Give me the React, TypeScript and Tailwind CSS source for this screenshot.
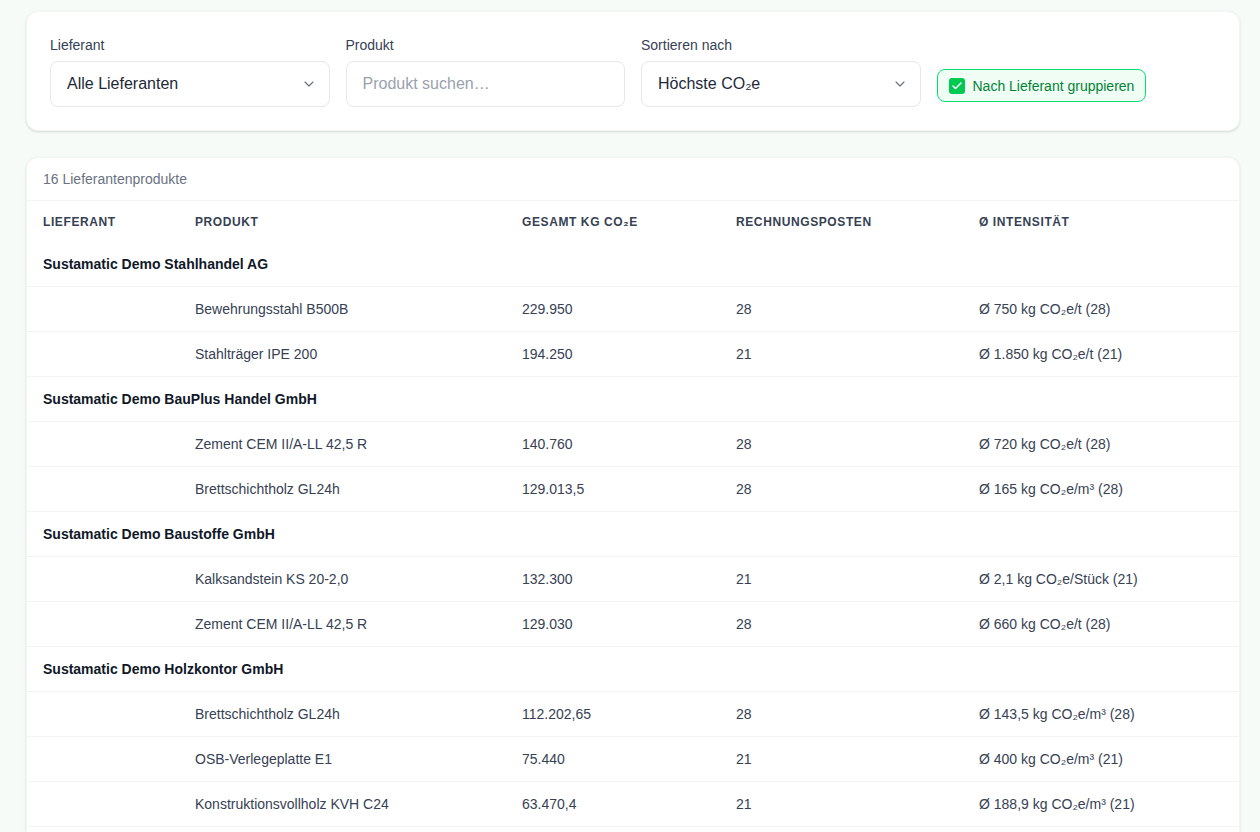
import { ChevronDown, Check } from 'lucide-react'

type Row = {
  product: string
  total: string
  items: number
  intensity: string
}

type Group = {
  supplier: string
  rows: Row[]
}

const groups: Group[] = [
  {
    supplier: 'Sustamatic Demo Stahlhandel AG',
    rows: [
      { product: 'Bewehrungsstahl B500B', total: '229.950', items: 28, intensity: 'Ø 750 kg CO₂e/t (28)' },
      { product: 'Stahlträger IPE 200', total: '194.250', items: 21, intensity: 'Ø 1.850 kg CO₂e/t (21)' },
    ],
  },
  {
    supplier: 'Sustamatic Demo BauPlus Handel GmbH',
    rows: [
      { product: 'Zement CEM II/A-LL 42,5 R', total: '140.760', items: 28, intensity: 'Ø 720 kg CO₂e/t (28)' },
      { product: 'Brettschichtholz GL24h', total: '129.013,5', items: 28, intensity: 'Ø 165 kg CO₂e/m³ (28)' },
    ],
  },
  {
    supplier: 'Sustamatic Demo Baustoffe GmbH',
    rows: [
      { product: 'Kalksandstein KS 20-2,0', total: '132.300', items: 21, intensity: 'Ø 2,1 kg CO₂e/Stück (21)' },
      { product: 'Zement CEM II/A-LL 42,5 R', total: '129.030', items: 28, intensity: 'Ø 660 kg CO₂e/t (28)' },
    ],
  },
  {
    supplier: 'Sustamatic Demo Holzkontor GmbH',
    rows: [
      { product: 'Brettschichtholz GL24h', total: '112.202,65', items: 28, intensity: 'Ø 143,5 kg CO₂e/m³ (28)' },
      { product: 'OSB-Verlegeplatte E1', total: '75.440', items: 21, intensity: 'Ø 400 kg CO₂e/m³ (21)' },
      { product: 'Konstruktionsvollholz KVH C24', total: '63.470,4', items: 21, intensity: 'Ø 188,9 kg CO₂e/m³ (21)' },
    ],
  },
  {
    supplier: 'Sustamatic Demo Dämmtechnik GmbH',
    rows: [
      { product: 'Mineralwolle WLG 035', total: '48.720', items: 21, intensity: 'Ø 1,2 kg CO₂e/m² (21)' },
      { product: 'EPS-Dämmplatte 035', total: '36.540', items: 21, intensity: 'Ø 3,4 kg CO₂e/m² (21)' },
      { product: 'Holzfaserdämmplatte 040', total: '22.680', items: 28, intensity: 'Ø 0,9 kg CO₂e/m² (28)' },
    ],
  },
  {
    supplier: 'Sustamatic Demo Transportbeton KG',
    rows: [
      { product: 'Transportbeton C25/30', total: '31.850', items: 28, intensity: 'Ø 245 kg CO₂e/m³ (28)' },
      { product: 'Transportbeton C30/37', total: '28.210', items: 21, intensity: 'Ø 290 kg CO₂e/m³ (21)' },
      { product: 'Estrich CT-C25-F4', total: '12.600', items: 21, intensity: 'Ø 180 kg CO₂e/t (21)' },
      { product: 'Mauermörtel M10', total: '8.400', items: 21, intensity: 'Ø 200 kg CO₂e/t (21)' },
    ],
  },
]

function SelectBox({ value }: { value: string }) {
  return (
    <div className="flex h-[46px] w-[279.5px] items-center justify-between rounded-lg border border-gray-200 bg-white pl-4 pr-3 text-base text-gray-800">
      <span>{value}</span>
      <ChevronDown className="h-4 w-4 text-gray-500" strokeWidth={1.75} />
    </div>
  )
}

export default function App() {
  const count = groups.reduce((sum, g) => sum + g.rows.length, 0)

  return (
    <div
      className="min-h-screen bg-[#f6fbf8] pl-[26px] pr-[20px] pt-[11px] pb-8 text-gray-700"
      style={{ fontFamily: '"Liberation Sans", Arial, sans-serif' }}
    >
      {/* Filter Card */}
      <div className="rounded-xl border border-gray-100 bg-white px-[23px] py-[23px] shadow-sm">
        <div className="flex items-end gap-4">
          <div>
            <label className="mb-1.5 block text-sm text-gray-700">Lieferant</label>
            <SelectBox value="Alle Lieferanten" />
          </div>
          <div>
            <label className="mb-1.5 block text-sm text-gray-700">Produkt</label>
            <input
              className="h-[46px] w-[279.5px] rounded-lg border border-gray-200 bg-white px-4 text-base text-gray-800 outline-none placeholder:text-gray-400"
              placeholder="Produkt suchen…"
            />
          </div>
          <div>
            <label className="mb-1.5 block text-sm text-gray-700">Sortieren nach</label>
            <SelectBox value="Höchste CO₂e" />
          </div>
          <button className="mb-[5px] flex h-[33px] items-center gap-2 rounded-lg border border-green-400 bg-green-50 px-[11px] text-sm text-green-700">
            <span className="flex h-4 w-4 items-center justify-center rounded-[3px] bg-green-500">
              <Check className="h-3 w-3 text-white" strokeWidth={3} />
            </span>
            Nach Lieferant gruppieren
          </button>
        </div>
      </div>

      {/* Products Table */}
      <div className="mt-[26px] overflow-hidden rounded-xl border border-gray-100 bg-white shadow-sm">
        <div className="flex h-[43px] items-center border-b border-gray-100 px-4 text-sm text-gray-500">
          {count} Lieferantenprodukte
        </div>
        <table className="w-full table-fixed border-collapse text-left">
          <colgroup>
            <col className="w-[152px]" />
            <col className="w-[327px]" />
            <col className="w-[214px]" />
            <col className="w-[243px]" />
            <col />
          </colgroup>
          <thead>
            <tr className="h-[41px] text-xs font-bold uppercase tracking-wider text-gray-700">
              <th className="px-4 font-bold">Lieferant</th>
              <th className="px-4 font-bold">Produkt</th>
              <th className="px-4 font-bold">Gesamt kg CO₂e</th>
              <th className="px-4 font-bold">Rechnungsposten</th>
              <th className="px-4 font-bold">Ø Intensität</th>
            </tr>
          </thead>
          <tbody className="text-sm">
            {groups.map((group, i) => (
              <>
                <tr
                  key={group.supplier}
                  className={`border-b border-gray-100 ${i === 0 ? 'h-[44px]' : 'h-[45px]'}`}
                >
                  <td colSpan={5} className="whitespace-nowrap px-4 font-bold text-gray-900">
                    {group.supplier}
                  </td>
                </tr>
                {group.rows.map((row) => (
                  <tr key={group.supplier + row.product} className="h-[45px] border-b border-gray-100 text-gray-700">
                    <td className="px-4"></td>
                    <td className="px-4">{row.product}</td>
                    <td className="px-4">{row.total}</td>
                    <td className="px-4">{row.items}</td>
                    <td className="px-4">{row.intensity}</td>
                  </tr>
                ))}
              </>
            ))}
          </tbody>
        </table>
      </div>
    </div>
  )
}
